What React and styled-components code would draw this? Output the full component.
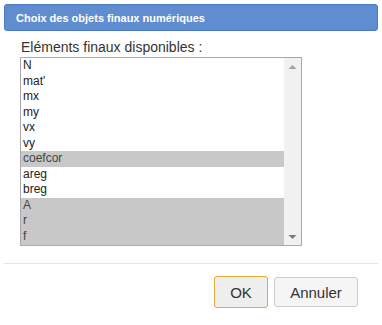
import React from "react";
import styled, { createGlobalStyle } from "styled-components";

const GlobalStyle = createGlobalStyle`
  html, body {
    margin: 0;
    padding: 0;
    background: #ffffff;
    font-family: "Liberation Sans", Arial, sans-serif;
  }
`;

const items = [
  { name: "N", selected: false },
  { name: "mat'", selected: false },
  { name: "mx", selected: false },
  { name: "my", selected: false },
  { name: "vx", selected: false },
  { name: "vy", selected: false },
  { name: "coefcor", selected: true },
  { name: "areg", selected: false },
  { name: "breg", selected: false },
  { name: "A", selected: true },
  { name: "r", selected: true },
  { name: "f", selected: true },
];

const App = () => {
  return (
    <>
      <GlobalStyle />
      <Dialog>
        <TitleBar>Choix des objets finaux numériques</TitleBar>
        <Body>
          <Label>Eléments finaux disponibles :</Label>
          <ListBox>
            <Options>
              {items.map((item, index) => (
                <Option key={index} $selected={item.selected}>
                  {item.name}
                </Option>
              ))}
            </Options>
            <Scrollbar>
              <Arrow>
                <svg width="9" height="6" viewBox="0 0 9 6">
                  <path d="M0.5 5 L4.5 1 L8.5 5 Z" fill="#a3a3a3" />
                </svg>
              </Arrow>
              <Arrow>
                <svg width="9" height="6" viewBox="0 0 9 6">
                  <path d="M0.5 1 L4.5 5 L8.5 1 Z" fill="#7a7a7a" />
                </svg>
              </Arrow>
            </Scrollbar>
          </ListBox>
        </Body>
        <Footer>
          <Button $focused $width={54}>OK</Button>
          <Button $width={84}>Annuler</Button>
        </Footer>
      </Dialog>
    </>
  );
};

export default App;

export const Dialog = styled.div`
  width: 374px;
  margin: 4px;
`;

export const TitleBar = styled.div`
  box-sizing: border-box;
  height: 27px;
  display: flex;
  align-items: center;
  padding-left: 11px;
  background-color: #5f8dcf;
  border: 1px solid #4a7cc6;
  border-radius: 3px;
  color: #ffffff;
  font-size: 11px;
  font-weight: bold;
`;

export const Body = styled.div`
  padding: 7px 0 0 16px;
  display: flex;
  flex-direction: column;
`;

export const Label = styled.div`
  height: 18px;
  line-height: 18px;
  margin-bottom: 1px;
  padding-left: 1px;
  font-size: 14px;
  color: #333333;
`;

export const ListBox = styled.div`
  box-sizing: border-box;
  width: 282px;
  height: 189px;
  border: 1px solid #a9a9a9;
  display: flex;
  overflow: hidden;
`;

export const Options = styled.div`
  flex: 1;
  display: flex;
  flex-direction: column;
`;

export const Option = styled.div`
  flex: 0 0 15.55px;
  line-height: 15.5px;
  padding-left: 2px;
  font-size: 12px;
  color: ${(props) => (props.$selected ? "#444444" : "#222222")};
  background-color: ${(props) => (props.$selected ? "#c8c8c8" : "#ffffff")};
`;

export const Scrollbar = styled.div`
  width: 17px;
  background-color: #f1f1f1;
  display: flex;
  flex-direction: column;
  justify-content: space-between;
`;

export const Arrow = styled.div`
  height: 17px;
  display: flex;
  align-items: center;
  justify-content: center;
`;

export const Footer = styled.div`
  margin-top: 17px;
  border-top: 1px solid #e5e5e5;
  padding: 12px 20px 0 0;
  display: flex;
  justify-content: flex-end;
  align-items: center;
  gap: 6px;
`;

export const Button = styled.button`
  box-sizing: border-box;
  width: ${(props) => props.$width}px;
  height: ${(props) => (props.$focused ? "32px" : "30px")};
  padding: 0;
  border: 1px solid ${(props) => (props.$focused ? "#e8a83a" : "#cccccc")};
  border-radius: 3px;
  background-color: ${(props) => (props.$focused ? "#eeeeee" : "#f5f5f5")};
  color: #333333;
  font-family: "Liberation Sans", Arial, sans-serif;
  font-size: 15px;
`;
